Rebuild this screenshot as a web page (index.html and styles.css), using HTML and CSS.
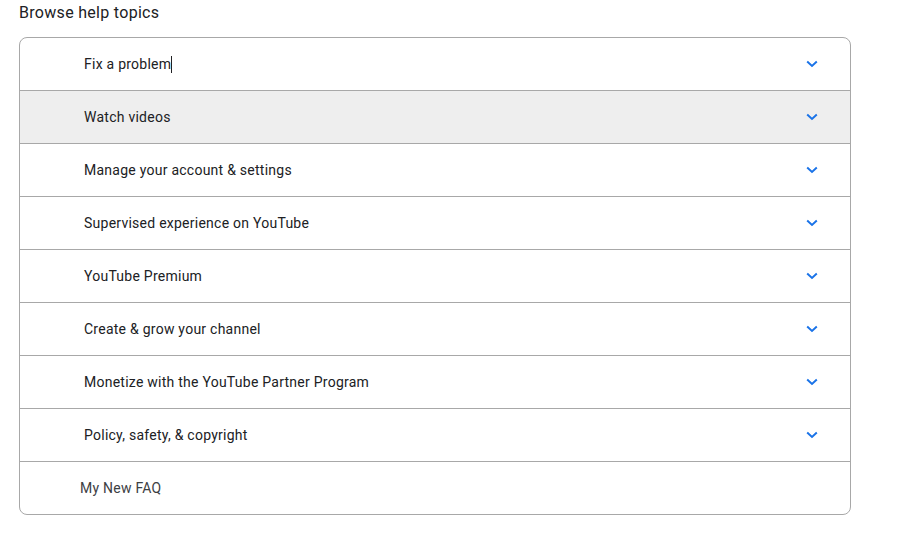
FILE: index.html
```html
<!DOCTYPE html>
<html>
<head>
<meta charset="utf-8">
<link rel="stylesheet" href="styles.css">
</head>
<body>
<main class="page">
  <h2 class="title">Browse help topics</h2>
  <div class="topics">
    <div class="row"><span class="label">Fix a problem<span class="caret"></span></span><svg class="chev" viewBox="0 0 12 8"><path d="M1.2 1.6l4.8 4.3 4.8-4.3" fill="none" stroke="#1a73e8" stroke-width="2"/></svg></div>
    <div class="row hover"><span class="label">Watch videos</span><svg class="chev" viewBox="0 0 12 8"><path d="M1.2 1.6l4.8 4.3 4.8-4.3" fill="none" stroke="#1a73e8" stroke-width="2"/></svg></div>
    <div class="row"><span class="label">Manage your account &amp; settings</span><svg class="chev" viewBox="0 0 12 8"><path d="M1.2 1.6l4.8 4.3 4.8-4.3" fill="none" stroke="#1a73e8" stroke-width="2"/></svg></div>
    <div class="row"><span class="label">Supervised experience on YouTube</span><svg class="chev" viewBox="0 0 12 8"><path d="M1.2 1.6l4.8 4.3 4.8-4.3" fill="none" stroke="#1a73e8" stroke-width="2"/></svg></div>
    <div class="row"><span class="label">YouTube Premium</span><svg class="chev" viewBox="0 0 12 8"><path d="M1.2 1.6l4.8 4.3 4.8-4.3" fill="none" stroke="#1a73e8" stroke-width="2"/></svg></div>
    <div class="row"><span class="label">Create &amp; grow your channel</span><svg class="chev" viewBox="0 0 12 8"><path d="M1.2 1.6l4.8 4.3 4.8-4.3" fill="none" stroke="#1a73e8" stroke-width="2"/></svg></div>
    <div class="row"><span class="label">Monetize with the YouTube Partner Program</span><svg class="chev" viewBox="0 0 12 8"><path d="M1.2 1.6l4.8 4.3 4.8-4.3" fill="none" stroke="#1a73e8" stroke-width="2"/></svg></div>
    <div class="row"><span class="label">Policy, safety, &amp; copyright</span><svg class="chev" viewBox="0 0 12 8"><path d="M1.2 1.6l4.8 4.3 4.8-4.3" fill="none" stroke="#1a73e8" stroke-width="2"/></svg></div>
    <div class="row faq"><span class="label">My New FAQ</span></div>
  </div>
</main>
</body>
</html>
```
FILE: styles.css
```css
html, body {
  margin: 0;
  padding: 0;
  background: #fff;
}
.page {
  padding: 3px 57px 0 19px;
  font-family: Roboto, "Noto Sans", sans-serif;
  color: #202124;
}
.title {
  margin: 0 0 14px 0;
  font-size: 16px;
  font-weight: 400;
  line-height: 20px;
  letter-spacing: 0.3px;
  color: #202124;
}
.topics {
  border: 1px solid #a8a8a8;
  border-radius: 8px;
  overflow: hidden;
  width: 830px;
}
.row {
  height: 52px;
  display: flex;
  align-items: center;
  justify-content: space-between;
  padding: 0 32px 0 64px;
  border-bottom: 1px solid #a8a8a8;
  font-size: 14px;
  letter-spacing: 0.25px;
}
.row:last-child {
  border-bottom: none;
}
.row.hover {
  background: #eeeeee;
}
.label {
  display: flex;
  align-items: center;
}
.caret {
  display: inline-block;
  width: 1px;
  height: 17px;
  background: #202124;
}
.chev {
  width: 12px;
  height: 8px;
}
.faq {
  padding-left: 60px;
  color: #3c4043;
}
```
